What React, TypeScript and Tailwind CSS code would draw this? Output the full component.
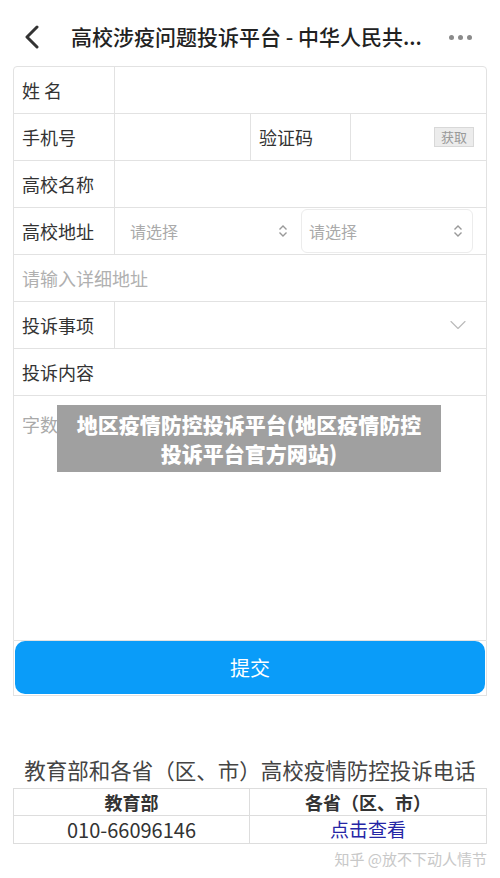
import { ChevronDown } from "lucide-react"

const FONT = { fontFamily: '"Noto Sans CJK SC", "Noto Sans", sans-serif' }

function UpDown() {
  return (
    <svg width="12" height="14" viewBox="0 0 12 14" fill="none" stroke="#999" strokeWidth="1.4">
      <path d="M2.5 5.5 L6 2 L9.5 5.5" />
      <path d="M2.5 8.5 L6 12 L9.5 8.5" />
    </svg>
  )
}

function Row({ children, last }: { children: React.ReactNode; last?: boolean }) {
  return (
    <div className={`flex h-[47px] items-stretch ${last ? "" : "border-b border-[#e2e2e2]"}`}>
      {children}
    </div>
  )
}

function Label({ text }: { text: string }) {
  return (
    <div className="flex w-[101px] shrink-0 items-center border-r border-[#e2e2e2] pl-[8px] text-[18px] text-[#333]">
      {text}
    </div>
  )
}

export default function App() {
  return (
    <div className="relative h-[878px] w-[500px] overflow-hidden bg-white" style={FONT}>
      {/* top bar */}
      <div className="flex h-[66px] items-center pt-[8px]">
        <div className="flex w-[71px] items-center pl-[24px]">
          <svg width="18" height="24" viewBox="0 0 18 24" fill="none" stroke="#333" strokeWidth="3" strokeLinecap="round" strokeLinejoin="round">
            <path d="M13 2 L3 12 L13 22" />
          </svg>
        </div>
        <div className="flex-1 text-[21px] font-medium text-[#222]">高校涉疫问题投诉平台 - 中华人民共...</div>
        <div className="flex gap-[4px] pr-[28px]">
          <span className="h-[5px] w-[5px] rounded-full bg-[#8a8a8a]" />
          <span className="h-[5px] w-[5px] rounded-full bg-[#8a8a8a]" />
          <span className="h-[5px] w-[5px] rounded-full bg-[#8a8a8a]" />
        </div>
      </div>

      {/* form */}
      <div className="mx-[13px] rounded-t-[4px] border border-[#e2e2e2]">
        <Row>
          <Label text="姓 名" />
          <div className="flex-1" />
        </Row>
        <Row>
          <Label text="手机号" />
          <div className="w-[135px]" />
          <div className="flex w-[101px] items-center border-x border-[#e2e2e2] pl-[8px] text-[18px] text-[#333]">验证码</div>
          <div className="flex flex-1 items-center justify-end pr-[12px]">
            <div className="flex h-[20px] w-[40px] items-center justify-center border border-[#d8d8d8] bg-[#ececec] text-[13px] text-[#999]">获取</div>
          </div>
        </Row>
        <Row>
          <Label text="高校名称" />
          <div className="flex-1" />
        </Row>
        <Row>
          <Label text="高校地址" />
          <div className="flex w-[186px] items-center justify-between pl-[15px] pr-[12px] text-[16px] text-[#aaa]">
            <span>请选择</span>
            <UpDown />
          </div>
          <div className="my-[1px] flex w-[172px] items-center justify-between rounded-[6px] border border-[#ececec] pl-[7px] pr-[8px] text-[16px] text-[#aaa]">
            <span>请选择</span>
            <UpDown />
          </div>
          <div className="flex-1" />
        </Row>
        <Row>
          <div className="flex items-center pl-[8px] text-[18px] text-[#b0b0b0]">请输入详细地址</div>
        </Row>
        <Row>
          <Label text="投诉事项" />
          <div className="flex flex-1 items-center justify-end pr-[14px]">
            <ChevronDown size={28} strokeWidth={1} color="#bbb" />
          </div>
        </Row>
        <Row>
          <div className="flex items-center pl-[8px] text-[18px] text-[#333]">投诉内容</div>
        </Row>
        <div className="h-[244px] pl-[8px] pt-[15px] text-[18px] text-[#aaa]">字数不超过</div>
      </div>

      {/* submit */}
      <div className="mx-[13px] border-x border-b border-[#e2e2e2] px-[1px] pb-[1px]">
        <button className="flex h-[53px] w-full items-center justify-center rounded-[10px] bg-[#0a9cf9] text-[20px] text-white">
          提交
        </button>
      </div>

      {/* overlay caption */}
      <div className="absolute left-[57px] top-[405px] flex h-[67px] w-[384px] flex-col items-center justify-center bg-[#a0a0a0] text-[21px] font-black leading-[29px] text-white">
        <div>地区疫情防控投诉平台(地区疫情防控</div>
        <div>投诉平台官方网站)</div>
      </div>

      {/* hotline */}
      <div className="mt-[59px] text-center text-[21.5px] leading-[30px] text-[#444]">
        教育部和各省（区、市）高校疫情防控投诉电话
      </div>
      <div className="mx-[13px] mt-[3px] border border-[#ddd] text-[#333]">
        <div className="flex h-[27px] border-b border-[#ddd] text-[18px] font-bold">
          <div className="flex w-[236px] items-center justify-center border-r border-[#ddd]">教育部</div>
          <div className="flex flex-1 items-center justify-center">各省（区、市）</div>
        </div>
        <div className="flex h-[27px] text-[19px]">
          <div className="flex w-[236px] items-center justify-center border-r border-[#ddd] text-[20px]">010-66096146</div>
          <div className="flex flex-1 items-center justify-center text-[#2626a6]">点击查看</div>
        </div>
      </div>
      <div className="mt-[3px] pr-[13px] text-right text-[15px] leading-[24px] text-[#c8c8c8]">知乎 @放不下动人情节</div>
    </div>
  )
}
